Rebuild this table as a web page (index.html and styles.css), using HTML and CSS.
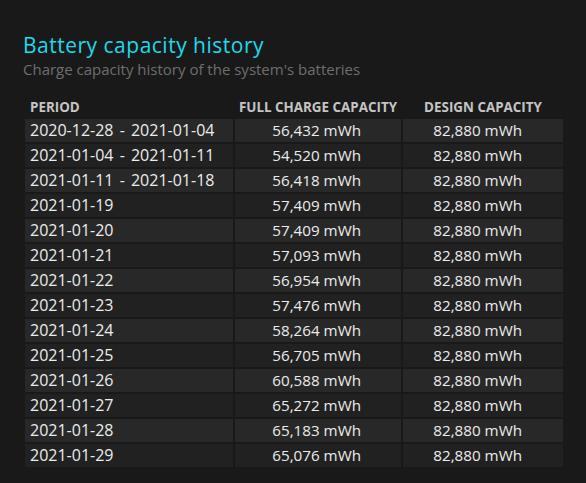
FILE: index.html
```html
<!DOCTYPE html>
<html>
<head>
<meta charset="utf-8">
<link rel="stylesheet" href="styles.css">
</head>
<body>
<div class="page">
  <h2 class="title">Battery capacity history</h2>
  <div class="subtitle">Charge capacity history of the system's batteries</div>
  <table class="history">
    <thead>
      <tr><th class="period">PERIOD</th><th class="cap">FULL CHARGE CAPACITY</th><th class="cap">DESIGN CAPACITY</th></tr>
    </thead>
    <tbody>
      <tr class="odd"><td class="date">2020-12-28 - 2021-01-04</td><td class="mw">56,432 mWh</td><td class="mw">82,880 mWh</td></tr>
      <tr class="even"><td class="date">2021-01-04 - 2021-01-11</td><td class="mw">54,520 mWh</td><td class="mw">82,880 mWh</td></tr>
      <tr class="odd"><td class="date">2021-01-11 - 2021-01-18</td><td class="mw">56,418 mWh</td><td class="mw">82,880 mWh</td></tr>
      <tr class="even"><td class="date">2021-01-19</td><td class="mw">57,409 mWh</td><td class="mw">82,880 mWh</td></tr>
      <tr class="odd"><td class="date">2021-01-20</td><td class="mw">57,409 mWh</td><td class="mw">82,880 mWh</td></tr>
      <tr class="even"><td class="date">2021-01-21</td><td class="mw">57,093 mWh</td><td class="mw">82,880 mWh</td></tr>
      <tr class="odd"><td class="date">2021-01-22</td><td class="mw">56,954 mWh</td><td class="mw">82,880 mWh</td></tr>
      <tr class="even"><td class="date">2021-01-23</td><td class="mw">57,476 mWh</td><td class="mw">82,880 mWh</td></tr>
      <tr class="odd"><td class="date">2021-01-24</td><td class="mw">58,264 mWh</td><td class="mw">82,880 mWh</td></tr>
      <tr class="even"><td class="date">2021-01-25</td><td class="mw">56,705 mWh</td><td class="mw">82,880 mWh</td></tr>
      <tr class="odd"><td class="date">2021-01-26</td><td class="mw">60,588 mWh</td><td class="mw">82,880 mWh</td></tr>
      <tr class="even"><td class="date">2021-01-27</td><td class="mw">65,272 mWh</td><td class="mw">82,880 mWh</td></tr>
      <tr class="odd"><td class="date">2021-01-28</td><td class="mw">65,183 mWh</td><td class="mw">82,880 mWh</td></tr>
      <tr class="even"><td class="date">2021-01-29</td><td class="mw">65,076 mWh</td><td class="mw">82,880 mWh</td></tr>
    </tbody>
  </table>
</div>
</body>
</html>
```

FILE: styles.css
```css
html, body {
  margin: 0;
  padding: 0;
  background: #191919;
}
body {
  font-family: "Open Sans", "Noto Sans", sans-serif;
  color: #ececec;
}
.page {
  padding: 32px 0 0 23px;
}
.title {
  margin: 0;
  font-size: 21px;
  font-weight: 400;
  line-height: 27px;
  color: #1fd9e8;
  letter-spacing: 0.5px;
}
.subtitle {
  font-size: 15px;
  line-height: 20px;
  color: #6e6e6e;
  margin-bottom: 17px;
}
.history {
  border-collapse: separate;
  border-spacing: 2px;
}
.history th {
  font-size: 13.4px;
  font-weight: 700;
  color: #c4c4c4;
  height: 19px;
  padding: 0;
  line-height: 19px;
  vertical-align: middle;
}
.history th.period {
  text-align: left;
  padding-left: 5px;
  width: 203px;
}
.history th.cap {
  text-align: center;
}
.history td {
  height: 23px;
  line-height: 23px;
  padding: 0;
  white-space: nowrap;
}
.history td.date {
  font-size: 16px;
  word-spacing: 2px;
  padding-left: 5px;
  width: 203px;
}
.history td.mw {
  font-size: 15.2px;
  text-align: right;
}
.history td.mw:nth-child(2) {
  width: 126px;
  padding-right: 40px;
}
.history td.mw:nth-child(3) {
  width: 119px;
  padding-right: 41px;
}
.history tr.odd td {
  background: #282828;
}
.history tr.even td {
  background: #212121;
}
```
